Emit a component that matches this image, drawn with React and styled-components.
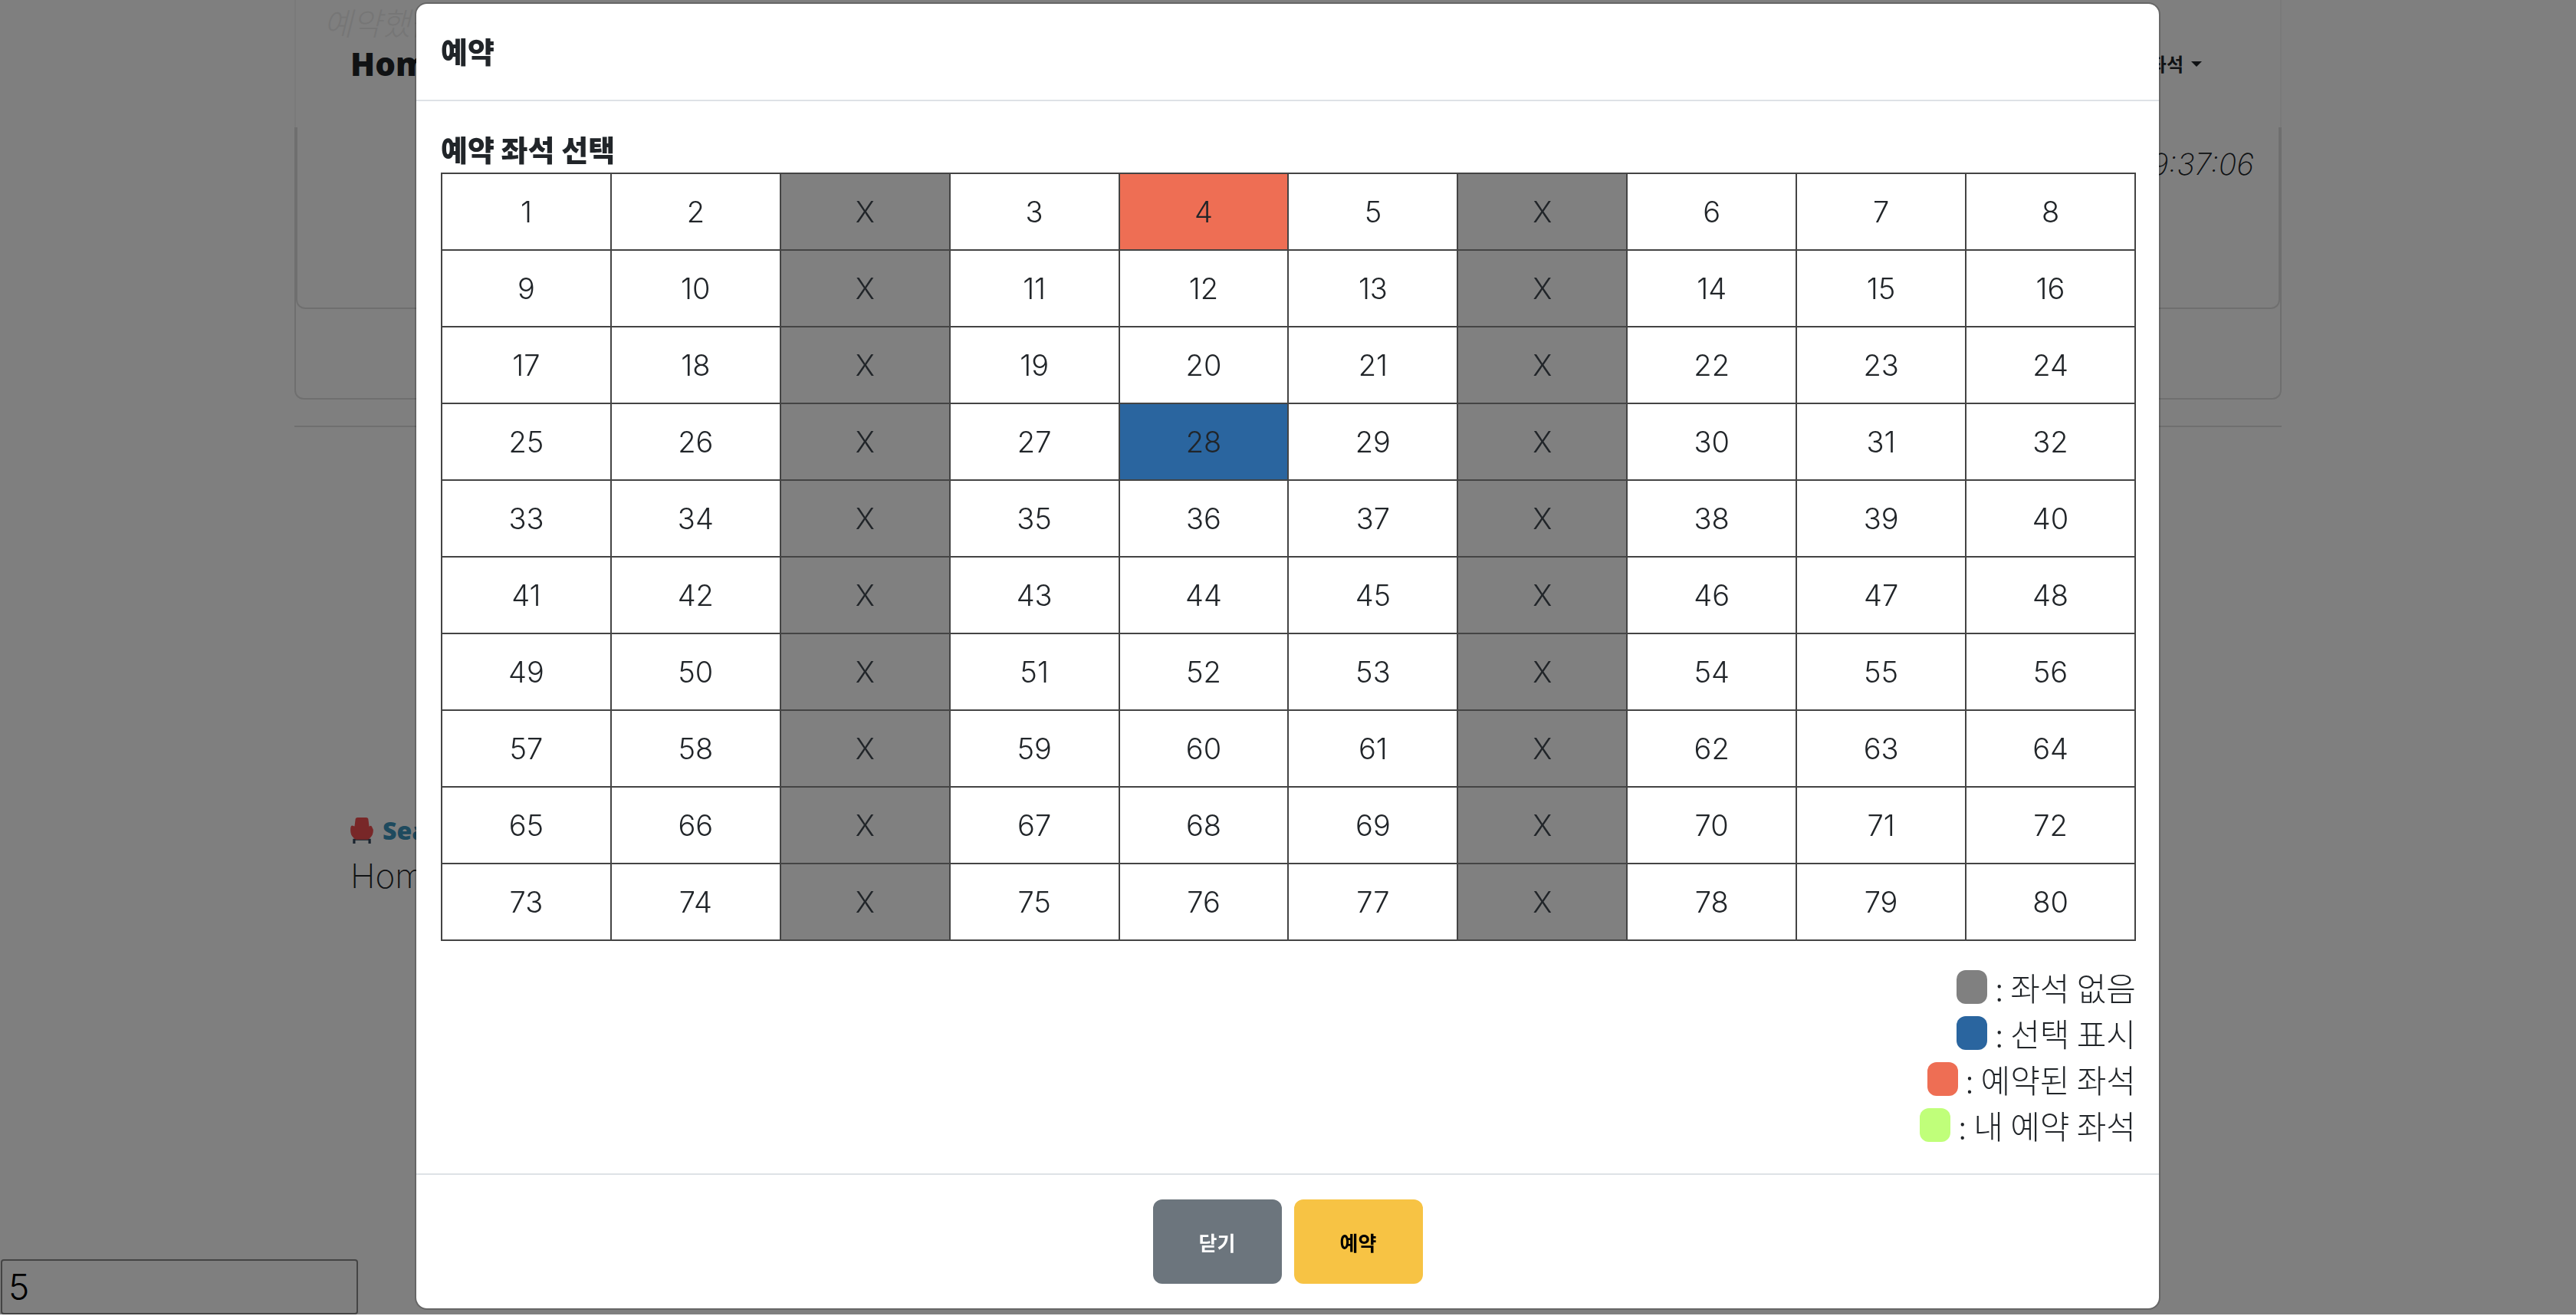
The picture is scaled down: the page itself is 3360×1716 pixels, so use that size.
import React from "react"
import styled, { createGlobalStyle } from "styled-components"

const GlobalStyle = createGlobalStyle`
  html, body {
    margin: 0;
    padding: 0;
    background: #fff;
    font-family: Inter, "Noto Sans CJK KR", sans-serif;
    color: #212529;
    overflow: hidden;
  }
  * { box-sizing: border-box; }
`

const Page = styled.div`
  display: flex;
  flex-direction: column;
  height: 1716px;
  padding: 0 0 2px 1px;
`

const Container = styled.div`
  flex: 1;
  width: 2592px;
  margin-left: 383px;
`

const TopBar = styled.header`
  height: 166px;
  border-left: 2px solid #f4f4f4;
  border-right: 2px solid #f4f4f4;
`

const Notice = styled.p`
  margin: 0 0 0 36px;
  font: italic 300 41px/56px "Noto Sans CJK KR", sans-serif;
  color: #ececec;
`

const TopRow = styled.div`
  display: flex;
  align-items: center;
  justify-content: space-between;
  padding: 0 102px 0 71px;
`

const Brand = styled.span`
  font: 800 42px/54px "Open Sans", sans-serif;
  color: #212529;
`

const SeatMenu = styled.span`
  display: flex;
  align-items: center;
  gap: 10px;
  font: 700 24px/32px "Noto Sans CJK KR", sans-serif;
  &::after {
    content: "";
    border-top: 7px solid #212529;
    border-left: 7px solid transparent;
    border-right: 7px solid transparent;
  }
`

const OuterCard = styled.section`
  height: 355px;
  border: 2px solid rgba(0, 0, 0, 0.125);
  border-top: 0;
  border-radius: 0 0 12px 12px;
`

const InnerCard = styled.div`
  height: 237px;
  padding: 20px 32px 0 0;
  border: 2px solid rgba(0, 0, 0, 0.125);
  border-top: 0;
  border-radius: 0 0 12px 12px;
  text-align: right;
`

const Clock = styled.span`
  font: italic 200 39px/56px Inter, sans-serif;
`

const Rule = styled.hr`
  margin: 34px 0 0;
  border: 0;
  border-top: 2px solid rgba(0, 0, 0, 0.125);
`

const SeatSection = styled.section`
  margin: 509px 0 0 73px;
`

const SeatTitle = styled.div`
  display: flex;
  align-items: center;
  gap: 12px;
  font: 800 32px/34px "Open Sans", sans-serif;
  color: #3c94bc;
`

const SeatName = styled.div`
  margin-top: 14px;
  font: 200 44px/56px Inter, sans-serif;
`

const CountInput = styled.input`
  width: 466px;
  height: 72px;
  padding: 0 8px;
  border: 2px solid #888;
  border-radius: 4px;
  background: transparent;
  font: 300 46px Inter, sans-serif;
  color: #000;
`

const Backdrop = styled.div`
  position: fixed;
  top: 0;
  left: 0;
  right: 0;
  bottom: 2px;
  background: rgba(0, 0, 0, 0.5);
`

const Modal = styled.div`
  position: absolute;
  top: 3px;
  left: 541px;
  width: 2277px;
  height: 1705px;
  display: flex;
  flex-direction: column;
  background: #fff;
  background-clip: padding-box;
  border: 2px solid rgba(0, 0, 0, 0.2);
  border-radius: 16px;
`

const ModalHeader = styled.div`
  height: 127px;
  padding: 0 32px 4px;
  display: flex;
  align-items: center;
  border-bottom: 2px solid #dee2e6;
`

const ModalTitle = styled.h5`
  margin: 0;
  font: 900 38px/54px "Noto Sans CJK KR", sans-serif;
`

const ModalBody = styled.div`
  flex: 1;
  padding: 30px 32px 0;
`

const SectionTitle = styled.h6`
  margin: 0;
  font: 900 38px/63px "Noto Sans CJK KR", sans-serif;
`

const SeatTable = styled.table`
  width: 2211px;
  table-layout: fixed;
  border-collapse: collapse;
`

const seatColors = {
  none: "#808080",
  booked: "#ee6e54",
  selected: "#2a659f",
  free: "#fff",
}

const SeatCell = styled.td`
  height: 100px;
  padding: 0;
  border: 2px solid #444;
  text-align: center;
  font: 300 38px/1 Inter, sans-serif;
  background: ${(p) => seatColors[p.$kind]};
`

const Legend = styled.div`
  margin: 30px -2px 0 0;
  display: flex;
  flex-direction: column;
  align-items: flex-end;
`

const LegendRow = styled.div`
  display: flex;
  align-items: center;
  height: 60px;
  gap: 10px;
  font: 300 42px/60px "Noto Sans CJK KR", sans-serif;
`

const Swatch = styled.span`
  width: 40px;
  height: 44px;
  border-radius: 12px;
  background: ${(p) => p.$color};
`

const ModalFooter = styled.div`
  display: flex;
  justify-content: center;
  gap: 16px;
  padding: 32px;
  border-top: 2px solid #dee2e6;
`

const ActionButton = styled.button`
  width: 168px;
  height: 110px;
  border: 0;
  border-radius: 12px;
  font: 700 26px "Noto Sans CJK KR", sans-serif;
  color: ${(p) => (p.$primary ? "#000" : "#fff")};
  background: ${(p) => (p.$primary ? "#f7c344" : "#6c757d")};
`

const Chair = () => (
  <svg width="30" height="34" viewBox="0 0 28 32">
    <path d="M3 26v6h3v-4h16v4h3v-6z" fill="#34495e" />
    <path
      d="M6 3q0-3 3-3h10q3 0 3 3l1 8q1-1 2-1t3 5q0 6-3 9-2 3-4 3H7q-2 0-4-3-3-3-3-9t3-5 2 1z"
      fill="#f04e50"
    />
  </svg>
)

// 열 3, 7 은 통로라서 좌석 번호가 없음
const buildRows = () => {
  let seat = 0
  return Array.from({ length: 10 }, () =>
    Array.from({ length: 10 }, (_, col) => {
      if (col === 2 || col === 6) return { label: "X", kind: "none" }
      seat += 1
      if (seat === 4) return { label: seat, kind: "booked" }
      if (seat === 28) return { label: seat, kind: "selected" }
      return { label: seat, kind: "free" }
    })
  )
}

const legend = [
  { color: "#808080", label: ": 좌석 없음" },
  { color: "#2a659f", label: ": 선택 표시" },
  { color: "#ee6e54", label: ": 예약된 좌석" },
  { color: "#c0ff7a", label: ": 내 예약 좌석" },
]

const App = () => {
  return (
    <Page>
      <GlobalStyle />
      <Container>
        <TopBar>
          <Notice>예약했습니다</Notice>
          <TopRow>
            <Brand>Home</Brand>
            <SeatMenu>좌석</SeatMenu>
          </TopRow>
        </TopBar>
        <OuterCard>
          <InnerCard>
            <Clock>09:37:06</Clock>
          </InnerCard>
        </OuterCard>
        <Rule />
        <SeatSection>
          <SeatTitle>
            <Chair />
            Seat
          </SeatTitle>
          <SeatName>Home</SeatName>
        </SeatSection>
      </Container>
      <CountInput defaultValue="5" />

      <Backdrop>
        <Modal>
          <ModalHeader>
            <ModalTitle>예약</ModalTitle>
          </ModalHeader>
          <ModalBody>
            <SectionTitle>예약 좌석 선택</SectionTitle>
            <SeatTable>
              <tbody>
                {buildRows().map((row, i) => (
                  <tr key={i}>
                    {row.map((cell, j) => (
                      <SeatCell key={j} $kind={cell.kind}>
                        {cell.label}
                      </SeatCell>
                    ))}
                  </tr>
                ))}
              </tbody>
            </SeatTable>
            <Legend>
              {legend.map((item) => (
                <LegendRow key={item.label}>
                  <Swatch $color={item.color} />
                  {item.label}
                </LegendRow>
              ))}
            </Legend>
          </ModalBody>
          <ModalFooter>
            <ActionButton>닫기</ActionButton>
            <ActionButton $primary>예약</ActionButton>
          </ModalFooter>
        </Modal>
      </Backdrop>
    </Page>
  )
}

export default App
